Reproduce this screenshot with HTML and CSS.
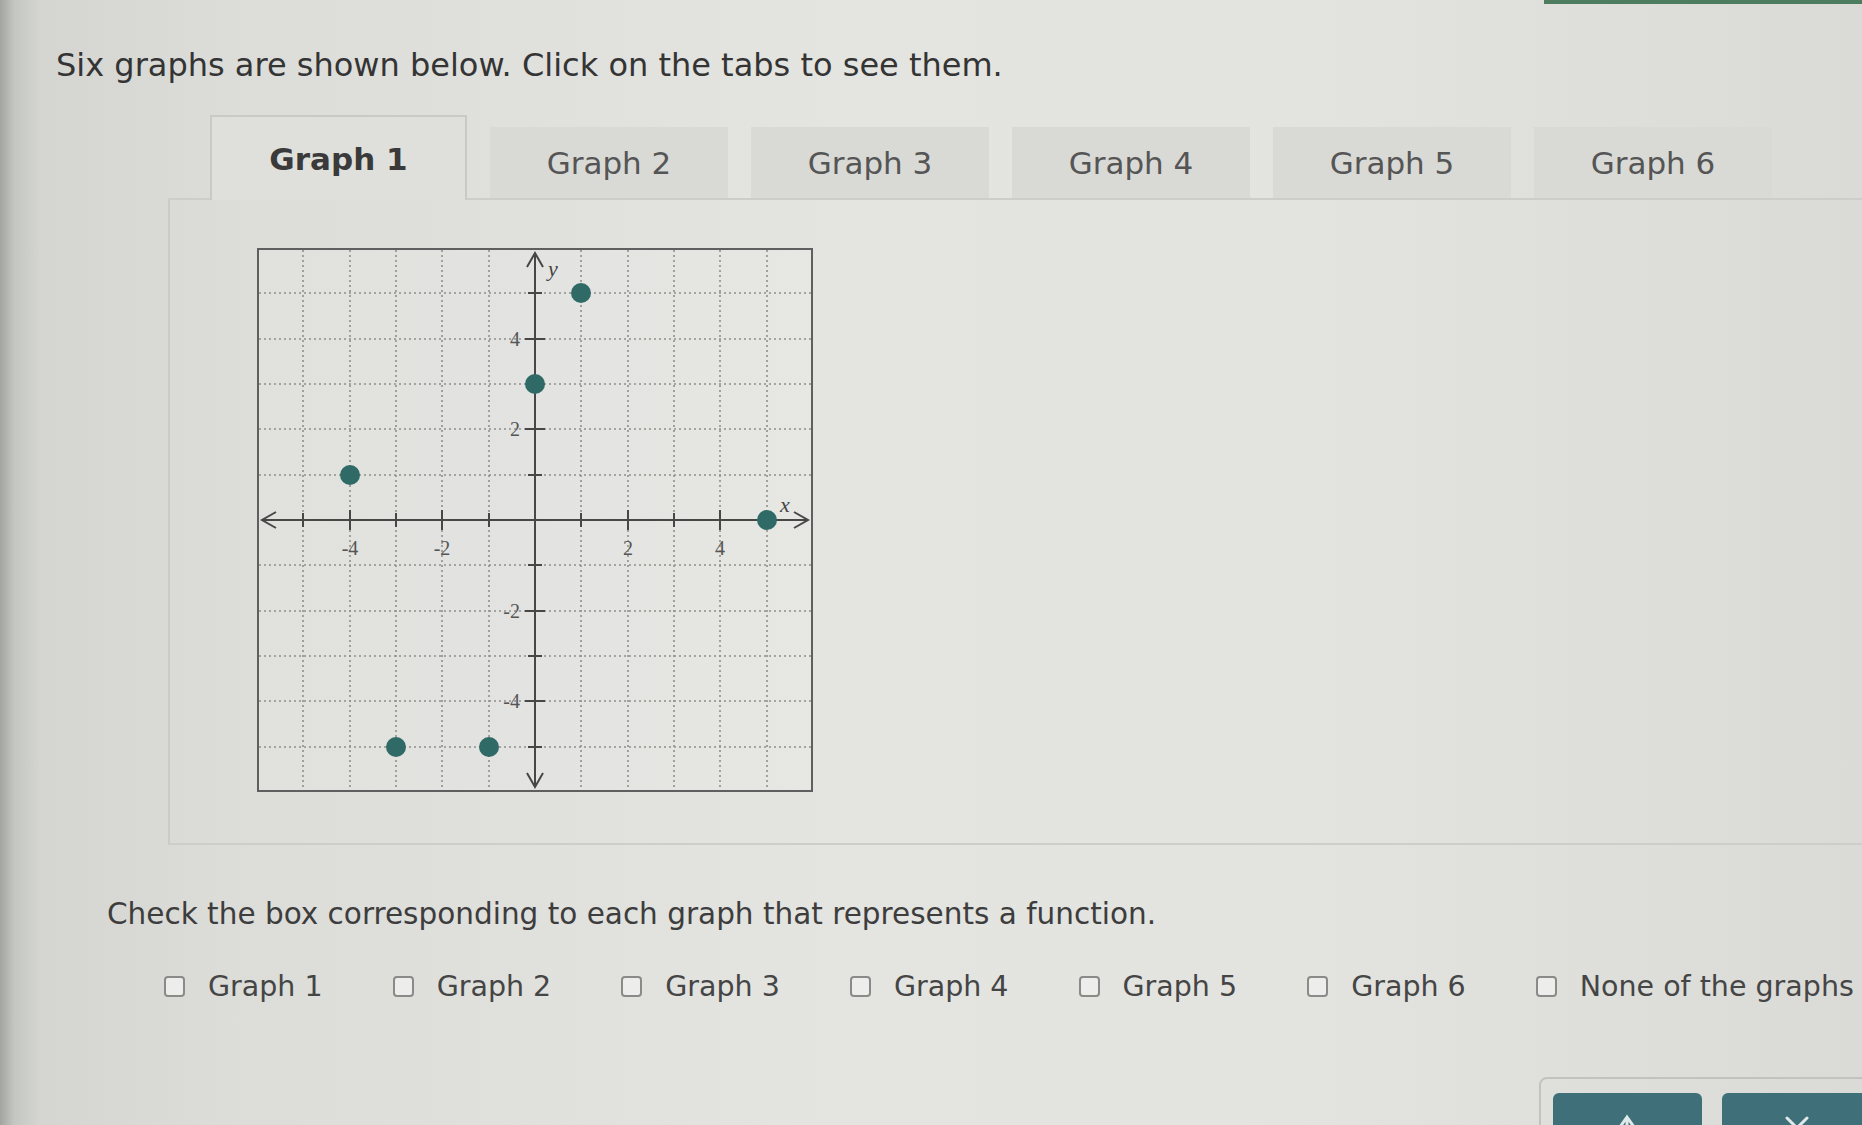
FILE: index.html
```html
<!DOCTYPE html>
<html lang="en">
<head>
<meta charset="utf-8">
<title>Six graphs</title>
<link rel="stylesheet" href="styles.css">
</head>
<body>
<div class="topline"><span class="topline-green"></span></div>
<main class="page">
  <p class="prompt">Six graphs are shown below. Click on the tabs to see them.</p>

  <section class="widget">
    <div class="tabs">
      <div class="tab active">Graph 1</div>
      <div class="tab">Graph 2</div>
      <div class="tab">Graph 3</div>
      <div class="tab">Graph 4</div>
      <div class="tab">Graph 5</div>
      <div class="tab">Graph 6</div>
    </div>
    <div class="panel">
      <svg class="graph" width="556" height="544" viewBox="0 0 556 544" xmlns="http://www.w3.org/2000/svg">
        <rect x="1" y="1" width="554" height="542" class="g-box"/>
        <g class="g-grid">
          <line x1="46" y1="2" x2="46" y2="542"/>
          <line x1="93" y1="2" x2="93" y2="542"/>
          <line x1="139" y1="2" x2="139" y2="542"/>
          <line x1="185" y1="2" x2="185" y2="542"/>
          <line x1="232" y1="2" x2="232" y2="542"/>
          <line x1="324" y1="2" x2="324" y2="542"/>
          <line x1="371" y1="2" x2="371" y2="542"/>
          <line x1="417" y1="2" x2="417" y2="542"/>
          <line x1="463" y1="2" x2="463" y2="542"/>
          <line x1="510" y1="2" x2="510" y2="542"/>
          <line x1="2" y1="45" x2="554" y2="45"/>
          <line x1="2" y1="91" x2="554" y2="91"/>
          <line x1="2" y1="136" x2="554" y2="136"/>
          <line x1="2" y1="181" x2="554" y2="181"/>
          <line x1="2" y1="227" x2="554" y2="227"/>
          <line x1="2" y1="317" x2="554" y2="317"/>
          <line x1="2" y1="363" x2="554" y2="363"/>
          <line x1="2" y1="408" x2="554" y2="408"/>
          <line x1="2" y1="453" x2="554" y2="453"/>
          <line x1="2" y1="499" x2="554" y2="499"/>
        </g>
        <g class="g-axis">
          <line x1="5" y1="272" x2="551" y2="272"/>
          <line x1="278" y1="5" x2="278" y2="539"/>
          <polyline points="19,264 5,272 19,280"/>
          <polyline points="537,264 551,272 537,280"/>
          <polyline points="270,19 278,5 286,19"/>
          <polyline points="270,525 278,539 286,525"/>
          <line x1="46" y1="265" x2="46" y2="279"/>
          <line x1="93" y1="262" x2="93" y2="282"/>
          <line x1="139" y1="265" x2="139" y2="279"/>
          <line x1="185" y1="262" x2="185" y2="282"/>
          <line x1="232" y1="265" x2="232" y2="279"/>
          <line x1="324" y1="265" x2="324" y2="279"/>
          <line x1="371" y1="262" x2="371" y2="282"/>
          <line x1="417" y1="265" x2="417" y2="279"/>
          <line x1="463" y1="262" x2="463" y2="282"/>
          <line x1="510" y1="265" x2="510" y2="279"/>
          <line x1="271" y1="45" x2="285" y2="45"/>
          <line x1="268" y1="91" x2="288" y2="91"/>
          <line x1="271" y1="136" x2="285" y2="136"/>
          <line x1="268" y1="181" x2="288" y2="181"/>
          <line x1="271" y1="227" x2="285" y2="227"/>
          <line x1="271" y1="317" x2="285" y2="317"/>
          <line x1="268" y1="363" x2="288" y2="363"/>
          <line x1="271" y1="408" x2="285" y2="408"/>
          <line x1="268" y1="453" x2="288" y2="453"/>
          <line x1="271" y1="499" x2="285" y2="499"/>
        </g>
        <g class="g-num">
          <text x="93" y="307" text-anchor="middle">-4</text>
          <text x="185" y="307" text-anchor="middle">-2</text>
          <text x="371" y="307" text-anchor="middle">2</text>
          <text x="463" y="307" text-anchor="middle">4</text>
          <text x="263" y="98" text-anchor="end">4</text>
          <text x="263" y="188" text-anchor="end">2</text>
          <text x="263" y="370" text-anchor="end">-2</text>
          <text x="263" y="460" text-anchor="end">-4</text>
        </g>
        <text class="g-var" x="523" y="264">x</text>
        <text class="g-var" x="291" y="28">y</text>
        <g class="g-pts">
          <circle cx="324" cy="45" r="10"/>
          <circle cx="278" cy="136" r="10"/>
          <circle cx="93" cy="227" r="10"/>
          <circle cx="510" cy="272" r="10"/>
          <circle cx="139" cy="499" r="10"/>
          <circle cx="232" cy="499" r="10"/>
        </g>
      </svg>
    </div>
  </section>

  <p class="question">Check the box corresponding to each graph that represents a function.</p>

  <div class="choices">
    <label class="choice"><span class="box"></span><span class="choice-text">Graph 1</span></label>
    <label class="choice"><span class="box"></span><span class="choice-text">Graph 2</span></label>
    <label class="choice"><span class="box"></span><span class="choice-text">Graph 3</span></label>
    <label class="choice"><span class="box"></span><span class="choice-text">Graph 4</span></label>
    <label class="choice"><span class="box"></span><span class="choice-text">Graph 5</span></label>
    <label class="choice"><span class="box"></span><span class="choice-text">Graph 6</span></label>
    <label class="choice"><span class="box"></span><span class="choice-text">None of the graphs</span></label>
  </div>

  <div class="actions">
    <div class="action-box">
      <button class="action-btn" type="button" aria-label="Undo">
        <svg class="action-icon" width="30" height="30" viewBox="0 0 30 30" xmlns="http://www.w3.org/2000/svg">
          <path d="M7 14 L14 4 L21 14 M14 4 L14 26"/>
        </svg>
      </button>
      <button class="action-btn" type="button" aria-label="Clear">
        <svg class="action-icon" width="30" height="30" viewBox="0 0 30 30" xmlns="http://www.w3.org/2000/svg">
          <path d="M5 5 L25 25 M25 5 L5 25"/>
        </svg>
      </button>
    </div>
  </div>
</main>
</body>
</html>
```

FILE: styles.css
```css
html, body {
  margin: 0;
  height: 1125px;
  overflow: hidden;
}

body {
  font-family: "DejaVu Sans", Verdana, sans-serif;
  color: #3d3d3d;
  background:
    linear-gradient(90deg, rgba(120,126,120,0.55) 0, rgba(150,154,148,0.25) 14px, rgba(0,0,0,0) 40px),
    linear-gradient(90deg, #d3d4d0 0, #dcdcd9 12%, #e4e4e1 45%, #e3e3e0 70%, #dadad6 100%);
}

.topline {
  display: flex;
  justify-content: flex-end;
  height: 4px;
}

.topline-green {
  width: 318px;
  background: #4d7d5e;
}

.page {
  padding-left: 56px;
}

.prompt {
  margin: 41px 0 0;
  font-size: 32px;
  line-height: 40px;
  color: #343434;
}

.widget {
  margin: 30px 0 0 112px;
}

.tabs {
  display: flex;
  align-items: flex-end;
  gap: 23px;
  padding-left: 42px;
}

.tab {
  width: 238px;
  height: 71px;
  display: flex;
  align-items: center;
  justify-content: center;
  font-size: 31px;
  color: #555;
  background: #d9d9d6;
}

.tab.active {
  width: 253px;
  height: 83px;
  margin-bottom: -2px;
  font-weight: bold;
  color: #3a3a3a;
  background: #dfdfdc;
  border: 2px solid #c9c9c5;
  border-bottom: none;
  position: relative;
  z-index: 1;
}

.panel {
  height: 595px;
  padding: 48px 0 0 87px;
  border-top: 2px solid #cdcdc9;
  border-left: 2px solid #cbcbc7;
  border-bottom: 2px solid #cdcdc9;
}

.graph {
  display: block;
}

.g-box {
  fill: rgba(255,255,255,0.12);
  stroke: #5f5f5f;
  stroke-width: 2;
}

.g-grid line {
  stroke: #8f8f8c;
  stroke-width: 1.6;
  stroke-dasharray: 2 3;
}

.g-axis line,
.g-axis polyline {
  stroke: #474747;
  stroke-width: 2;
  fill: none;
}

.g-num text {
  font-family: "Liberation Serif", "Times New Roman", serif;
  font-size: 20px;
  fill: #555;
}

.g-var {
  font-family: "Liberation Serif", "Times New Roman", serif;
  font-style: italic;
  font-size: 22px;
  fill: #444;
}

.g-pts circle {
  fill: #2f6a67;
}

.question {
  margin: 51px 0 0 51px;
  font-size: 29.5px;
  line-height: 36px;
  color: #3d3d3d;
}

.choices {
  display: flex;
  align-items: center;
  gap: 70px;
  margin: 36px 0 0 108px;
  height: 36px;
}

.choice {
  display: flex;
  align-items: center;
  gap: 23px;
  font-size: 28.5px;
  color: #454545;
}

.box {
  width: 17px;
  height: 17px;
  border: 2px solid #8a8a88;
  border-radius: 4px;
  background: #ededeb;
}

.actions {
  display: flex;
  justify-content: flex-end;
  margin-top: 73px;
}

.action-box {
  display: flex;
  gap: 20px;
  width: 337px;
  height: 60px;
  margin-right: -30px;
  padding: 14px 0 0 12px;
  border: 2px solid #c2c2bf;
  border-radius: 8px;
}

.action-btn {
  width: 149px;
  height: 70px;
  border: none;
  border-radius: 6px;
  background: #3f7079;
  padding: 20px 0 0;
  display: flex;
  justify-content: center;
  align-items: flex-start;
}

.action-icon path {
  stroke: #dfe9e9;
  stroke-width: 3;
  fill: none;
  stroke-linecap: round;
}
```
